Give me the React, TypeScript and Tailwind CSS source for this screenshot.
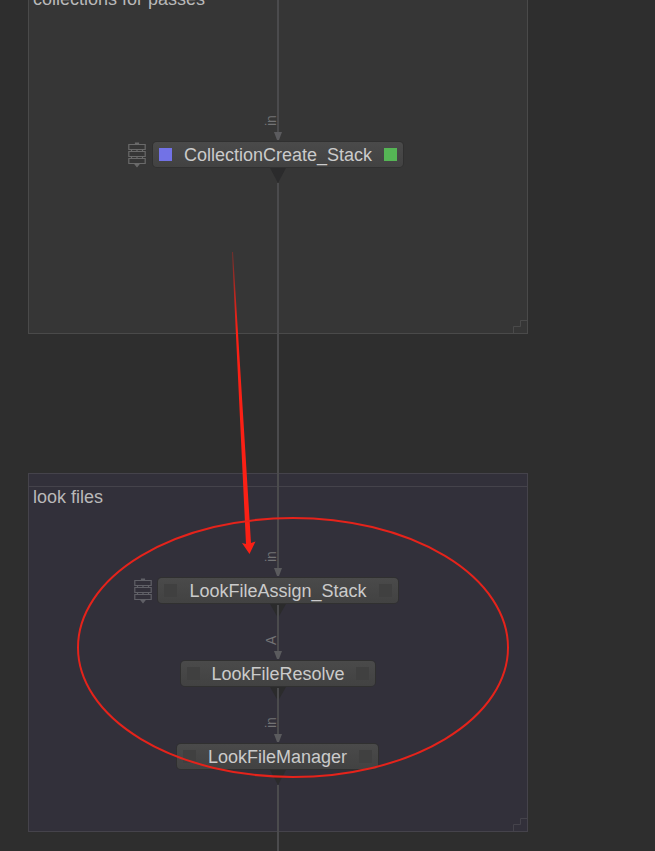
type Tone = "gray" | "violet";

interface GraphNode {
  name: string;
  place: string;
  left: string;
  right: string;
  stack?: string;
}

const nodes: GraphNode[] = [
  {
    name: "CollectionCreate_Stack",
    place: "left-[153px] top-[142px] w-[250px]",
    left: "bg-[#7272e6]",
    right: "bg-[#55b555]",
    stack: "left-[128px] top-[142px] text-[#6a6a6a]",
  },
  {
    name: "LookFileAssign_Stack",
    place: "left-[158px] top-[578px] w-[240px]",
    left: "bg-[#404040]",
    right: "bg-[#404040]",
    stack: "left-[134px] top-[578px] text-[#606067]",
  },
  {
    name: "LookFileResolve",
    place: "left-[181px] top-[661px] w-[194px]",
    left: "bg-[#404040]",
    right: "bg-[#404040]",
  },
  {
    name: "LookFileManager",
    place: "left-[177px] top-[744px] w-[201px]",
    left: "bg-[#404040]",
    right: "bg-[#404040]",
  },
];

const ports = [
  { label: "in", place: "top-[112px]" },
  { label: "in", place: "top-[548px]" },
  { label: "A", place: "top-[631px]" },
  { label: "in", place: "top-[714px]" },
];

function Backdrop({ title, place, tone }: { title: string; place: string; tone: Tone }) {
  const colors =
    tone === "gray"
      ? "bg-[#363636] border-[#4a4a4a] text-[#4a4a4a]"
      : "bg-[#32303a] border-[#45434b] text-[#45434b]";
  return (
    <section className={`absolute left-7 w-[500px] border ${colors} ${place}`}>
      <div className="h-[13px] border-b border-current" />
      <h2 className="px-1 text-[18px] leading-5 font-normal text-[#b9b9b9]">{title}</h2>
      <svg className="absolute right-0 bottom-0 h-[13px] w-[14px]" viewBox="0 0 14 13" fill="none" stroke="currentColor" aria-hidden="true">
        <path d="M.5 13V6.500H7.500V.5H14" />
      </svg>
    </section>
  );
}

function StackIcon({ place }: { place: string }) {
  return (
    <svg className={`absolute h-[26px] w-[18px] ${place}`} viewBox="0 0 18 26" fill="none" stroke="currentColor" strokeWidth="1.2" aria-hidden="true">
      <path d="M.8 2.500h16.400v5H.8zM.8 9.500h16.400v5H.8zM.8 16.500h16.400v5H.8z" />
      <path d="M3.500 7.500v2M14.500 7.500v2M3.500 14.500v2M14.500 14.500v2M9 7.500v2M9 14.500v2" />
      <path d="M7.500 1h3v1.500h-3zM7 22h4l-2 2.500z" fill="currentColor" />
    </svg>
  );
}

function NodeBox({ node }: { node: GraphNode }) {
  return (
    <div className={`absolute flex h-[25px] items-center justify-between rounded-[4px] bg-linear-to-b from-[#4a4a4a] to-[#424242] px-[6px] shadow-[0_0_0_1px_#303030] ${node.place}`}>
      <span className={`size-[13px] ${node.left}`} />
      <span className="text-[18px] leading-6 text-[#cbcbcb]">{node.name}</span>
      <span className={`size-[13px] ${node.right}`} />
    </div>
  );
}

function Wires() {
  return (
    <svg className="absolute inset-0 h-[851px] w-[655px]" viewBox="0 0 655 851" aria-hidden="true">
      <g fill="#2b2b2c">
        <path d="M270 168h16l-8 15z" />
        <path d="M270 604h16l-8 14z" />
        <path d="M270 687h16l-8 14z" />
        <path d="M270 770h16l-8 15z" />
      </g>
      <g stroke="#4b4b4d" strokeWidth="2">
        <path d="M278 0V134M278 183V570M278 605V653M278 688V736M278 785V851" />
      </g>
      <g fill="#5b5b5e">
        <path d="M274 132h8l-3 8h-2z" />
        <path d="M274 568h8l-3 8h-2z" />
        <path d="M274 651h8l-3 8h-2z" />
        <path d="M274 734h8l-3 8h-2z" />
      </g>
    </svg>
  );
}

function Annotations() {
  return (
    <svg className="absolute inset-0 h-[851px] w-[655px]" viewBox="0 0 655 851" aria-hidden="true">
      <defs>
        <linearGradient id="fade" gradientUnits="userSpaceOnUse" x1="232" y1="250" x2="236" y2="330">
          <stop offset="0" stopColor="#f02017" stopOpacity="0.3" />
          <stop offset="1" stopColor="#fb2015" />
        </linearGradient>
      </defs>
      <path d="M232 252L233 252L251 543L255.500 541.500L249.500 554L242 543L246 544Z" fill="url(#fade)" />
      <ellipse cx="293" cy="647.500" rx="215" ry="129.500" fill="none" stroke="#e5231b" strokeWidth="2" />
    </svg>
  );
}

export default function App() {
  return (
    <main className="relative h-screen w-full overflow-hidden bg-[#2e2e2e] font-['Liberation_Sans',Arial,sans-serif]">
      <Backdrop title="collections for passes" place="-top-[25px] h-[359px]" tone="gray" />
      <Backdrop title="look files" place="top-[473px] h-[359px]" tone="violet" />
      <Wires />
      {ports.map((port) => (
        <span
          key={port.place}
          className={`absolute left-[263px] flex h-[18px] w-4 rotate-180 items-center justify-center text-[14px] leading-4 text-[#737375] [writing-mode:vertical-rl] ${port.place}`}
        >
          {port.label}
        </span>
      ))}
      {nodes.map((node) => (
        <div key={node.name}>
          {node.stack && <StackIcon place={node.stack} />}
          <NodeBox node={node} />
        </div>
      ))}
      <Annotations />
    </main>
  );
}
